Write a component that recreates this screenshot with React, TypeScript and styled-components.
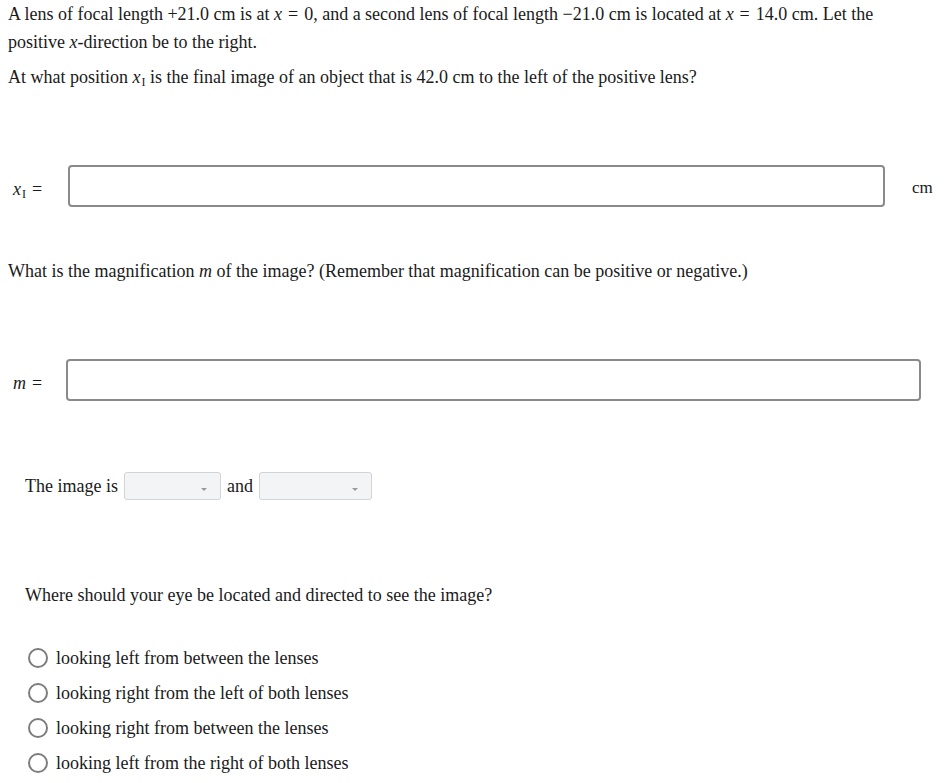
import React, { useState } from "react";
import styled, { createGlobalStyle } from "styled-components";

const GlobalStyle = createGlobalStyle`
	body {
		margin: 0;
		background: #fff;
		color: #1a1a1a;
		font-family: "Liberation Serif", "Times New Roman", serif;
		font-size: 18px;
	}
`;

const options = [
	"looking left from between the lenses",
	"looking right from the left of both lenses",
	"looking right from between the lenses",
	"looking left from the right of both lenses",
];

const App = () => {
	const [choice, setChoice] = useState<number | null>(null);

	return (
		<>
			<GlobalStyle />
			<Page>
				<Para>
					A lens of focal length +21.0 cm is at <Var>x</Var>
					<Rel>=</Rel>0, and a second lens of focal length −21.0 cm is located
					at <Var>x</Var>
					<Rel>=</Rel>14.0 cm. Let the positive <Var>x</Var>-direction be to
					the right.
				</Para>
				<Para top={7}>
					At what position <Var>x</Var>
					<Sub>I</Sub> is the final image of an object that is 42.0 cm to the
					left of the positive lens?
				</Para>

				<AnswerRow top={74}>
					<Label>
						<Var>x</Var>
						<Sub>I</Sub>
						<Rel>=</Rel>
					</Label>
					<AnswerInput width={817} />
					<Unit>cm</Unit>
				</AnswerRow>

				<Para top={50}>
					What is the magnification <Var>m</Var> of the image? (Remember that
					magnification can be positive or negative.)
				</Para>

				<AnswerRow top={74}>
					<Label narrow>
						<Var>m</Var>
						<Rel>=</Rel>
					</Label>
					<AnswerInput width={855} />
				</AnswerRow>

				<SelectRow>
					The image is
					<Dropdown width={97} />
					and
					<Dropdown width={113} />
				</SelectRow>

				<Prompt>Where should your eye be located and directed to see the image?</Prompt>

				<Choices>
					{options.map((opt, i) => (
						<Choice key={opt} onClick={() => setChoice(i)}>
							<Radio checked={choice === i} />
							{opt}
						</Choice>
					))}
				</Choices>
			</Page>
		</>
	);
};

export default App;

const Page = styled.div`
	padding: 0 8px;
`;

const Para = styled.p<{ top?: number }>`
	max-width: 905px;
	margin: ${({ top }) => top ?? 0}px 0 0;
	line-height: 28px;
`;

const Var = styled.i`
	font-style: italic;
`;

const Rel = styled.span`
	margin: 0 0.33em;
`;

const Sub = styled.sub`
	font-size: 12px;
	line-height: 0;
	vertical-align: -3px;
	margin-left: 1px;
`;

const AnswerRow = styled.div<{ top: number }>`
	display: flex;
	align-items: center;
	margin-top: ${({ top }) => top}px;
	padding-left: 5px;
`;

const Label = styled.span<{ narrow?: boolean }>`
	width: ${({ narrow }) => (narrow ? 53 : 55)}px;
	padding-top: 6px;
	font-size: 18px;
	line-height: 20px;
	white-space: nowrap;
`;

const AnswerInput = styled.input.attrs({ type: "text" })<{ width: number }>`
	box-sizing: border-box;
	width: ${({ width }) => width}px;
	height: 42px;
	margin: 0;
	border: 2px solid #8a8a8a;
	border-radius: 4px;
	background: #fff;
	outline: none;
`;

const Unit = styled.span`
	margin-left: 27px;
	padding-top: 4px;
	font-size: 17px;
`;

const SelectRow = styled.div`
	display: flex;
	align-items: center;
	gap: 6px;
	margin-top: 71px;
	padding-left: 17px;
	line-height: 28px;
`;

const Dropdown = styled.span<{ width: number }>`
	position: relative;
	box-sizing: border-box;
	width: ${({ width }) => width}px;
	height: 28px;
	border: 1px solid #d4d4d4;
	border-radius: 3px;
	background: #f3f4f6;

	&::after {
		content: "";
		position: absolute;
		right: 13px;
		top: 15px;
		border-left: 3px solid transparent;
		border-right: 3px solid transparent;
		border-top: 3px solid #999;
	}
`;

const Prompt = styled.p`
	margin: 81px 0 0;
	padding-left: 17px;
	line-height: 28px;
`;

const Choices = styled.div`
	display: flex;
	flex-direction: column;
	gap: 7px;
	margin-top: 35px;
	padding-left: 20px;
`;

const Choice = styled.label`
	display: flex;
	align-items: center;
	gap: 8px;
	height: 28px;
	cursor: pointer;
`;

const Radio = styled.span<{ checked: boolean }>`
	box-sizing: border-box;
	width: 20px;
	height: 20px;
	border-radius: 50%;
	border: 2px solid #7d7d7d;
	background: ${({ checked }) =>
		checked ? "radial-gradient(#555 0 4px, #fff 5px)" : "#fff"};
`;
